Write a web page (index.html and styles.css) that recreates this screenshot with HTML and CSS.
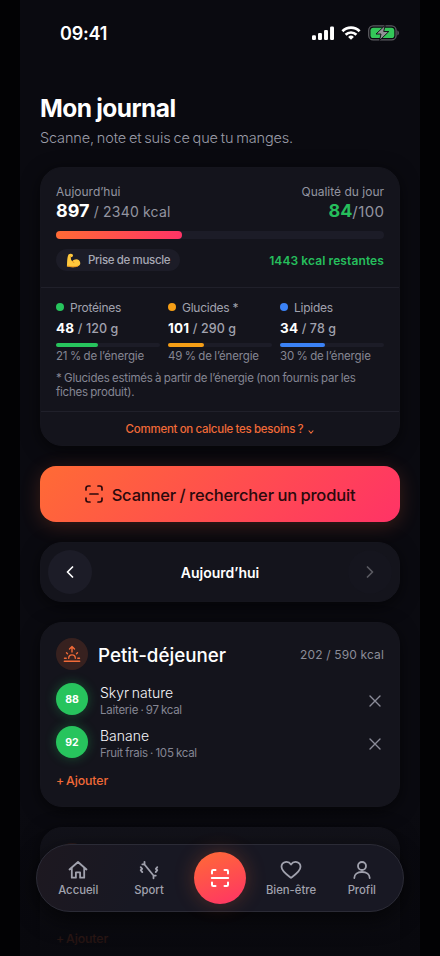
FILE: index.html
```html
<!DOCTYPE html>
<html lang="fr">
<head>
<meta charset="utf-8">
<title>Mon journal</title>
<link rel="stylesheet" href="styles.css">
</head>
<body>
<div class="phone">
  <header class="status">
    <span class="clock">09:41</span>
    <span class="status-icons">
      <svg width="22" height="14" viewBox="0 0 22.300 14" fill="#fff"><rect x="0" y="9.4" width="4" height="4.6" rx="1.2"/><rect x="6.1" y="7" width="4" height="7" rx="1.2"/><rect x="12.2" y="4" width="4" height="10" rx="1.2"/><rect x="18.3" y="0.5" width="4" height="13.5" rx="1.2"/></svg>
      <svg width="20" height="14" viewBox="0 0 20 14" fill="none" stroke="#fff" stroke-width="2.7"><path d="M1.4 5.2a12.2 12.2 0 0 1 17.2 0"/><path d="M4.6 8.7a7.7 7.7 0 0 1 10.8 0"/><path d="M10 13.8 7.1 10.9a4.2 4.2 0 0 1 5.8 0Z" fill="#fff" stroke="none"/></svg>
      <svg width="32" height="16" viewBox="0 0 32 16"><rect x=".7" y=".9" width="27.4" height="14" rx="4.5" fill="none" stroke="#5b5b60" stroke-width="1.3"/><rect x="2.5" y="2.7" width="23.8" height="10.4" rx="2.9" fill="#34c759"/><path d="M29.4 5.5c2 .6 2 4.300 0 4.900z" fill="#5b5b60"/><path d="M17.200.3 8 9h5l-1.500 6.500L20.800 6.500h-5.100z" fill="#929296" stroke="#0b0a10" stroke-width=".9"/></svg>
    </span>
  </header>

  <main class="content">
    <h1 class="title">Mon journal</h1>
    <p class="subtitle">Scanne, note et suis ce que tu manges.</p>

    <section class="card summary">
      <div class="summary-top">
        <div class="row labels"><span>Aujourd’hui</span><span>Qualité du jour</span></div>
        <div class="row totals"><span class="kcal"><b>897</b> / 2340 kcal</span><span class="score"><b>84</b>/100</span></div>
        <div class="track"><div class="fill"></div></div>
        <div class="row goal">
          <span class="pill"><svg width="15" height="15" viewBox="0 0 15 15"><path d="M2.5 1.500C3.700.5 6 .5 6.700 1.600c.7 1.200.1 2.800-1.700 2.500C4.600 5.800 5.200 7.600 6.500 8c1.400-2 4.600-2.600 6.500-.8 1.700 1.700 1.700 4.200.2 5.400-2.800 2.200-8.300 1.700-12.300.9C1.200 9.800 1 4.200 2.500 1.500Z" fill="#ffc83d"/><path d="M5 4.200 3.900 3.500M6.500 8c.2 1 .8 1.500 1.800 1.600M1.500 13c3 .9 7.800 1.200 10.500.1" fill="none" stroke="#e48b17" stroke-width=".9"/></svg><span>Prise de muscle</span></span>
          <span class="left">1443 kcal restantes</span>
        </div>
      </div>
      <div class="macros">
        <div class="macro green"><div class="name"><i></i><span>Protéines</span></div><div class="amount"><b>48</b> / 120 g</div><div class="bar"><div style="width:40%"></div></div><div class="share">21 % de l’énergie</div></div>
        <div class="macro amber"><div class="name"><i></i><span>Glucides *</span></div><div class="amount"><b>101</b> / 290 g</div><div class="bar"><div style="width:35%"></div></div><div class="share">49 % de l’énergie</div></div>
        <div class="macro blue"><div class="name"><i></i><span>Lipides</span></div><div class="amount"><b>34</b> / 78 g</div><div class="bar"><div style="width:43.500%"></div></div><div class="share">30 % de l’énergie</div></div>
        <p class="note">* Glucides estimés à partir de l’énergie (non fournis par les<br>fiches produit).</p>
      </div>
      <div class="help"><span>Comment on calcule tes besoins ?</span><svg width="6" height="4" viewBox="0 0 6 4" fill="none" stroke="currentColor" stroke-width="1.100"><path d="m.7.5 2.300 2.600L5.300.5"/></svg></div>
    </section>

    <button class="scan"><svg width="18" height="18" viewBox="0 0 18 18" fill="none" stroke="currentColor" stroke-width="1.700" stroke-linecap="round"><path d="M1 5V3.200A2.200 2.200 0 0 1 3.200 1H5M13 1h1.800A2.200 2.200 0 0 1 17 3.200V5M17 13v1.800a2.200 2.200 0 0 1-2.200 2.200H13M5 17H3.200A2.200 2.200 0 0 1 1 14.800V13M5 9h8"/></svg><span>Scanner / rechercher un produit</span></button>

    <div class="card day">
      <span class="arrow"><svg width="8" height="12" viewBox="0 0 8 12"><path d="M6.500 1 1.500 6l5 5"/></svg></span>
      <span class="day-name">Aujourd’hui</span>
      <span class="arrow off"><svg width="8" height="12" viewBox="0 0 8 12"><path d="m1.500 1 5 5-5 5"/></svg></span>
    </div>

    <section class="card meal">
      <div class="meal-head">
        <span class="sun"><svg width="18" height="18" viewBox="0 0 18 18" fill="none" stroke="currentColor" stroke-width="1.400" stroke-linecap="round" stroke-linejoin="round"><path d="M9 7V1.500M6.500 4 9 1.500 11.500 4M3.500 7.800l1 1M14.500 7.800l-1 1M1.500 13.200h1.700M14.800 13.200h1.700M5.700 13.200a3.300 3.300 0 0 1 6.600 0M1.300 16.300h15.400"/></svg></span>
        <h2>Petit-déjeuner</h2><span class="meal-kcal">202 / 590 kcal</span>
      </div>
      <div class="item"><span class="grade">88</span><div class="item-text"><div class="food">Skyr nature</div><div class="detail">Laiterie · 97 kcal</div></div><svg class="close" width="12" height="12" viewBox="0 0 12 12"><path d="m1 1 10 10M11 1 1 11"/></svg></div>
      <div class="item"><span class="grade">92</span><div class="item-text"><div class="food">Banane</div><div class="detail">Fruit frais · 105 kcal</div></div><svg class="close" width="12" height="12" viewBox="0 0 12 12"><path d="m1 1 10 10M11 1 1 11"/></svg></div>
      <div class="add">+ Ajouter</div>
    </section>

    <section class="card next"><span class="sun"></span><div class="add">+ Ajouter</div></section>
  </main>
  <div class="fade"></div>
  <nav class="tabs">
    <a class="tab"><svg width="20" height="20" viewBox="0 0 20 20"><path d="M1.500 9.500 10 2l8.500 7.500M3.800 8v9.700h4.100v-5.300h4.200v5.300h4.100V8"/></svg><span>Accueil</span></a>
    <a class="tab"><svg width="20" height="20" viewBox="0 0 20 20"><path d="m5.300 4.200 9.400 11.600M5.500 1.800v2.900M3.300 4.300h2M14.500 15.300v3M14.700 15.600h2.100M1.700 7.200l1.500 1.600-1.500 1.300 1.600 2M18.300 7.200l-1.500 1.600 1.500 1.300-1.600 2"/></svg><span>Sport</span></a>
    <a class="tab center"><span class="fab"><svg width="20" height="20" viewBox="0 0 20 20"><path d="M2 5.500V3.300Q2 2 3.300 2h2.200M14.500 2h2.200Q18 2 18 3.300v2.200M18 14.500v2.200q0 1.300-1.300 1.300h-2.200M5.500 18H3.300Q2 18 2 16.700v-2.200M1.800 10h16.400"/></svg></span></a>
    <a class="tab"><svg width="22" height="20" viewBox="0 0 22 20"><path d="M11 17.800C9 16.200 1.500 11.500 1.500 6.800c0-5.300 6.700-6.600 9.500-2.200 2.800-4.400 9.500-3.100 9.500 2.200 0 4.700-7.500 9.400-9.500 11Z"/></svg><span>Bien-être</span></a>
    <a class="tab"><svg width="20" height="20" viewBox="0 0 20 20"><circle cx="10" cy="6" r="4"/><path d="M2.300 18c0-3.500 3-6 7.700-6s7.700 2.500 7.700 6"/></svg><span>Profil</span></a>
  </nav>
</div>
</body>
</html>
```
FILE: styles.css
```css
* { box-sizing: border-box; }
body { margin: 0; background: #020204; color: #fff; font-family: Inter, sans-serif; }
h1, h2, p { margin: 0; }
svg { display: block; flex: none; }
.phone { position: relative; width: 400px; height: 956px; margin: 0 20px; overflow: hidden; background: #0a0a10; white-space: nowrap; }
.row { display: flex; justify-content: space-between; align-items: center; }

.status { height: 66px; padding: 0 20px 0 40px; display: flex; justify-content: space-between; align-items: center; }
.clock { font-size: 18px; font-weight: 600; letter-spacing: -.2px; }
.status-icons { display: flex; align-items: center; gap: 7px; }

.content { padding: 26px 20px 0; }
.title { height: 33px; line-height: 33px; font-size: 24.500px; font-weight: 650; letter-spacing: -.55px; word-spacing: -.5px; }
.subtitle { margin-top: 2px; height: 21px; line-height: 21px; font-size: 14.500px; font-weight: 300; letter-spacing: -.15px; word-spacing: -1px; color: #9b9ca8; }

.card { background: #14141c; border: 1px solid #15151d; border-radius: 22px; box-shadow: 0 4px 18px #0009; }
.summary { margin-top: 19px; height: 279px; }
.summary-top { height: 120px; padding: 15px 15px 0; border-bottom: 1px solid #20202a; }
.labels { height: 16px; font-size: 12px; color: #9394a0; }
.totals { height: 23px; color: #9394a0; }
.totals b { font-size: 18px; font-weight: 700; letter-spacing: 0; }
.kcal b { color: #fff; }
.kcal { font-size: 14px; letter-spacing: .2px; }
.score { font-size: 15px; letter-spacing: .4px; margin-right: -.4px; }
.score b { color: #26be5c; }
.track { margin-top: 9px; height: 8px; border-radius: 4px; background: #1c1c27; }
.fill { width: 126px; height: 8px; border-radius: 4px; background: linear-gradient(100deg, #ff6b35, #ff3366); }
.goal { margin-top: 10px; height: 22px; }
.pill { width: 124px; height: 22px; padding-left: 10px; border-radius: 11px; background: #1c1c27; display: flex; align-items: center; gap: 7px; font-size: 11.500px; font-weight: 500; letter-spacing: -.3px; word-spacing: -.3px; color: #a7a8b4; }
.left { color: #26be5c; font-size: 12px; font-weight: 600; letter-spacing: .1px; }

.macros { height: 124px; padding: 11px 15px 0; display: grid; grid-template-columns: repeat(3, 104px); column-gap: 8px; align-content: start; border-bottom: 1px solid #20202a; }
.name { display: flex; align-items: center; gap: 6px; height: 16px; font-size: 12px; letter-spacing: -.25px; color: #a1a2ae; }
.name i { width: 8px; height: 8px; border-radius: 50%; background: var(--tone); }
.green { --tone: #27c45d; }
.amber { --tone: #f59e16; }
.blue { --tone: #3b82f6; }
.amount { margin-top: 5px; height: 17px; line-height: 17px; font-size: 12.500px; font-weight: 500; letter-spacing: .1px; color: #a1a2ae; }
.amount b { color: #fff; font-size: 13.500px; letter-spacing: .2px; }
.bar { margin-top: 6px; height: 4px; border-radius: 2px; background: #1c1c27; }
.bar div { height: 4px; border-radius: 2px; background: var(--tone); }
.share { height: 18px; line-height: 18px; font-size: 11.500px; letter-spacing: -.15px; word-spacing: -.6px; color: #858693; }
.note { grid-column: 1 / -1; margin-top: 6px; font-size: 11.500px; line-height: 14px; letter-spacing: -.23px; word-spacing: -.5px; color: #858693; }
.help { height: 33px; display: flex; align-items: center; justify-content: center; gap: 5px; color: #f16a38; font-size: 11.500px; font-weight: 500; letter-spacing: -.25px; word-spacing: -.4px; }
.help svg { margin-top: 6px; }

.scan { margin-top: 20px; width: 360px; height: 56px; padding: 0; border: 0; border-radius: 16px; background: linear-gradient(135deg, #ff6b35, #ff3366); box-shadow: 0 4px 20px #ff6b3533; color: #2b090c; display: flex; align-items: center; justify-content: center; gap: 9px; font: 500 16.500px/24px Inter, sans-serif; letter-spacing: -.17px; word-spacing: -.7px; white-space: nowrap; }
.scan span { padding-top: 2px; }

.day { margin-top: 20px; height: 60px; padding: 0 7px; display: flex; align-items: center; justify-content: space-between; }
.arrow { width: 44px; height: 44px; border-radius: 50%; background: #1c1c27; display: flex; align-items: center; justify-content: center; }
.arrow path { fill: none; stroke: #fff; stroke-width: 1.700; stroke-linecap: round; stroke-linejoin: round; }
.off { background: #15151e; }
.off path { stroke: #5a5a62; }
.day-name { font-size: 14px; font-weight: 600; }

.meal { margin-top: 20px; height: 185px; padding: 15px 15px 0; }
.meal-head { display: flex; align-items: center; height: 32px; }
.sun { width: 32px; height: 32px; border-radius: 50%; background: #37211f; color: #f16a38; display: flex; align-items: center; justify-content: center; }
h2 { margin-left: 10px; padding-top: 2px; flex: 1; font-size: 18.800px; font-weight: 550; }
.meal-kcal { font-size: 12px; letter-spacing: .15px; color: #8b8c98; }
.item { display: flex; align-items: center; height: 32px; margin-top: 11px; }
.meal-head + .item { margin-top: 13px; }
.grade { width: 32px; height: 32px; border-radius: 50%; background: #27c45d; box-shadow: 0 0 12px #22c55e55; font-size: 10.500px; font-weight: 700; display: flex; align-items: center; justify-content: center; }
.item-text { margin-left: 12px; padding-top: 3px; flex: 1; }
.food { height: 18px; line-height: 18px; font-size: 14px; font-weight: 350; word-spacing: -1.200px; color: #f5f5f8; }
.detail { height: 16px; line-height: 16px; font-size: 11.500px; letter-spacing: -.25px; word-spacing: -.7px; color: #858693; }
.close { margin: 3px 3px 0 0; }
.close path { fill: none; stroke: #8b8c98; stroke-width: 1.400; stroke-linecap: round; }
.add { margin-top: 14px; line-height: 18px; font-size: 12.300px; font-weight: 500; letter-spacing: -.1px; word-spacing: -1.200px; color: #f16a38; }

.next { margin-top: 20px; height: 160px; padding: 15px; }
.next .add { margin-top: 55px; }
.fade { position: absolute; inset: 806px 0 0; background: linear-gradient(to bottom, #08080d00, #08080dc8 75%, #08080dee); }

.tabs { position: absolute; left: 16px; top: 844px; width: 368px; height: 68px; padding: 0 7px 0 6px; border: 1px solid #2b2b36; border-radius: 34px; background: linear-gradient(110deg, #1d1820, #181823 30%); box-shadow: 0 8px 22px #0009; display: grid; grid-template-columns: 70.500px 71px 71px 71px 70.500px; }
.tab { display: flex; flex-direction: column; align-items: center; padding-top: 15px; gap: 3px; font-size: 11.300px; line-height: 14px; font-weight: 500; color: #a1a2ae; }
.tab svg path, .tab svg circle { fill: none; stroke: currentColor; stroke-width: 1.800; stroke-linecap: round; stroke-linejoin: round; }
.center { padding-top: 7px; }
.fab { width: 52px; height: 52px; border-radius: 50%; background: linear-gradient(160deg, #ff6b35, #ff3366); box-shadow: 0 0 20px #ff6b3540; color: #fff; display: flex; align-items: center; justify-content: center; }
.fab svg path { stroke-width: 2; }
```
